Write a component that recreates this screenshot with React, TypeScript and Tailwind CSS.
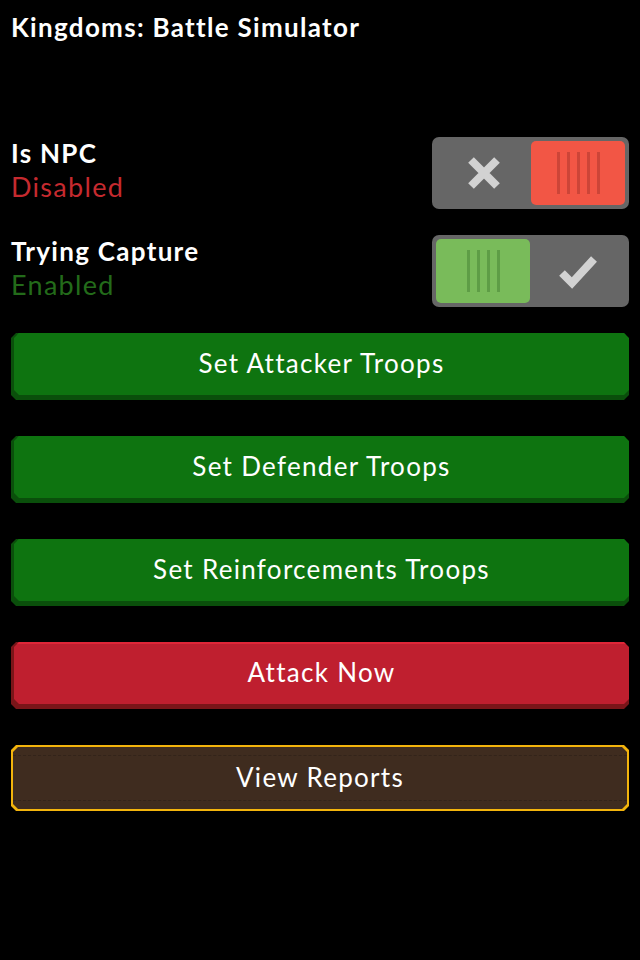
import type { ReactNode } from 'react';

const chamfer =
  '[clip-path:polygon(5px_0,calc(100%-5px)_0,100%_5px,100%_calc(100%-5px),calc(100%-5px)_100%,5px_100%,0_calc(100%-5px),0_5px)]';

function Stripes({ color, count }: { color: string; count: number }) {
  return (
    <div className="flex gap-[7px]">
      {Array.from({ length: count }).map((_, i) => (
        <div key={i} className={`w-[3px] h-[42px] ${color}`} />
      ))}
    </div>
  );
}

function Toggle({ on }: { on: boolean }) {
  return (
    <div className="w-[197px] h-[72px] rounded-[7px] bg-[#666666] p-[4px] flex">
      {on ? (
        <>
          <div className="w-[94px] h-full rounded-[5px] bg-[#79bb5a] flex items-center justify-center">
            <Stripes color="bg-[#5e9d46]" count={4} />
          </div>
          <div className="flex-1 flex items-center justify-center">
            <svg width="40" height="36" viewBox="0 0 40 36">
              <path d="M4 20 L14 30 L36 6" fill="none" stroke="#d2d2d2" strokeWidth="8" />
            </svg>
          </div>
        </>
      ) : (
        <>
          <div className="flex-1 flex items-center justify-center">
            <svg width="34" height="34" viewBox="0 0 34 34">
              <path d="M4 4 L30 30 M30 4 L4 30" stroke="#d2d2d2" strokeWidth="8" />
            </svg>
          </div>
          <div className="w-[94px] h-full rounded-[5px] bg-[#f25645] flex items-center justify-center">
            <Stripes color="bg-[#cc4538]" count={5} />
          </div>
        </>
      )}
    </div>
  );
}

function Row({ label, value, on }: { label: string; value: string; on: boolean }) {
  return (
    <div className="flex items-center justify-between px-[11px]">
      <div className="leading-[33px] -mt-[6px]">
        <div className="text-[26px] font-bold text-white">{label}</div>
        <div className={`text-[27px] ${on ? 'text-[#236b1a]' : 'text-[#c62a2f]'}`}>{value}</div>
      </div>
      <Toggle on={on} />
    </div>
  );
}

function GameButton({ children, edge, face, top }: { children: ReactNode; edge: string; face: string; top: string }) {
  return (
    <div className={`h-[67px] ${edge} ${chamfer} pl-[3px] pb-[5px]`}>
      <div
        className={`h-full ${face} ${top} border-t-[2px] ${chamfer} flex items-center justify-center pb-[4px] text-white text-[26px]`}
      >
        {children}
      </div>
    </div>
  );
}

export default function App() {
  return (
    <div className="w-[640px] h-[960px] bg-black font-['Lato','Open_Sans',sans-serif] tracking-[1.3px]">
      <h1 className="pl-[11px] pt-[10px] text-[26px] font-bold text-white leading-[34px]">
        Kingdoms: Battle Simulator
      </h1>

      <div className="mt-[93px] flex flex-col gap-[26px]">
        <Row label="Is NPC" value="Disabled" on={false} />
        <Row label="Trying Capture" value="Enabled" on={true} />
      </div>

      <div className="mt-[26px] px-[11px] flex flex-col gap-[36px]">
        <GameButton edge="bg-[#0a4f0b]" face="bg-[#0e7410]" top="border-[#0e7410]">
          Set Attacker Troops
        </GameButton>
        <GameButton edge="bg-[#0a4f0b]" face="bg-[#0e7410]" top="border-[#0e7410]">
          Set Defender Troops
        </GameButton>
        <GameButton edge="bg-[#0a4f0b]" face="bg-[#0e7410]" top="border-[#0e7410]">
          Set Reinforcements Troops
        </GameButton>
        <GameButton edge="bg-[#7a1519]" face="bg-[#bf1f2f]" top="border-[#e02638]">
          Attack Now
        </GameButton>

        <div className={`h-[66px] bg-[#f3b40c] ${chamfer} p-[2px]`}>
          <div className={`h-full bg-[#3f2c1f] ${chamfer} flex flex-col justify-between py-[8px]`}>
            <div className="border-t border-dashed border-[#33241a]" />
            <div className="text-white text-[26px] text-center leading-[30px] -mt-[2px]">View Reports</div>
            <div className="border-t border-dashed border-[#33241a]" />
          </div>
        </div>
      </div>
    </div>
  );
}
